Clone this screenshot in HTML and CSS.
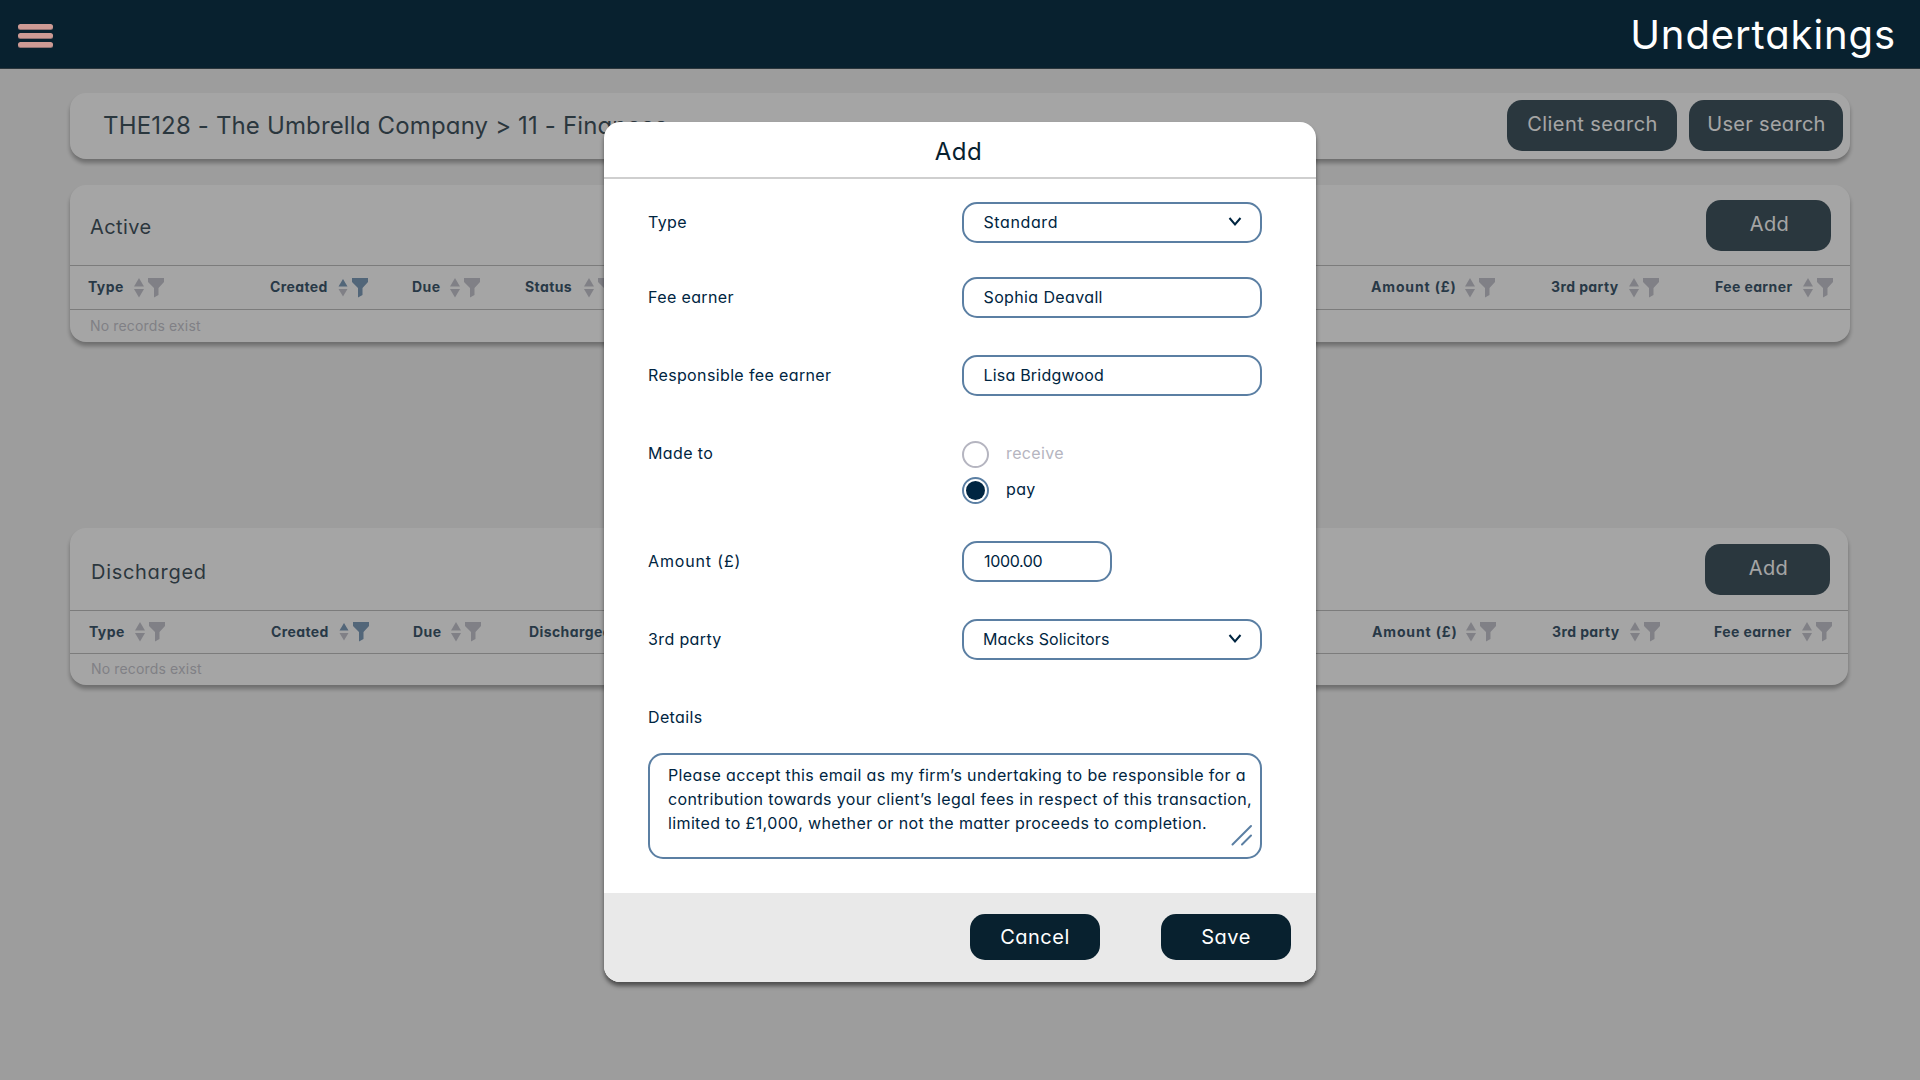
FILE: index.html
```html
<!DOCTYPE html>
<html lang="en">
<head>
    <meta charset="UTF-8">
    <meta name="viewport" content="width=device-width, initial-scale=1.0">
    <title>Undertakings</title>
    <link rel="stylesheet" href="styles.css">
</head>
<body>
    <!-- Icons used in the table headings -->
    <svg class="sprite" width="0" height="0">
        <symbol id="sort" viewBox="0 0 10 20">
            <path d="M5 0 10 8.500H0z"/>
            <path d="M0 11h10l-5 8.500z"/>
        </symbol>
        <symbol id="sort-asc" viewBox="0 0 10 20">
            <path fill="#577fa6" d="M5 1 9.500 8.500H.5z"/>
            <path d="M.5 11h9L5 18.500z"/>
        </symbol>
        <symbol id="filter" viewBox="0 0 16 20">
            <path d="M0 0h16v4l-5.500 6v7L6 19.500V10L0 4z"/>
        </symbol>
    </svg>

    <header class="topbar">
        <button class="menu" aria-label="Menu"><span></span><span></span><span></span></button>
        <h1>Undertakings</h1>
    </header>

    <main class="page">
        <section class="card crumbs">
            <h2>THE128 - The Umbrella Company &gt; 11 - Finances</h2>
            <button class="btn client">Client search</button>
            <button class="btn user">User search</button>
        </section>

        <section class="card active">
            <div class="card-top">
                <h3>Active</h3>
                <button class="btn add">Add</button>
            </div>
            <div class="columns">
                <div class="col"><span>Type</span><svg class="sort"><use href="#sort"/></svg><svg class="filter"><use href="#filter"/></svg></div>
                <div class="col sorted"><span>Created</span><svg class="sort"><use href="#sort-asc"/></svg><svg class="filter"><use href="#filter"/></svg></div>
                <div class="col"><span>Due</span><svg class="sort"><use href="#sort"/></svg><svg class="filter"><use href="#filter"/></svg></div>
                <div class="col status"><span>Status</span><svg class="sort"><use href="#sort"/></svg><svg class="filter"><use href="#filter"/></svg></div>
                <div class="col money"><span>Amount (£)</span><svg class="sort"><use href="#sort"/></svg><svg class="filter"><use href="#filter"/></svg></div>
                <div class="col"><span>3rd party</span><svg class="sort"><use href="#sort"/></svg><svg class="filter"><use href="#filter"/></svg></div>
                <div class="col"><span>Fee earner</span><svg class="sort"><use href="#sort"/></svg><svg class="filter"><use href="#filter"/></svg></div>
            </div>
            <p class="empty">No records exist</p>
        </section>

        <section class="card discharged">
            <div class="card-top">
                <h3>Discharged</h3>
                <button class="btn add">Add</button>
            </div>
            <div class="columns">
                <div class="col"><span>Type</span><svg class="sort"><use href="#sort"/></svg><svg class="filter"><use href="#filter"/></svg></div>
                <div class="col sorted"><span>Created</span><svg class="sort"><use href="#sort-asc"/></svg><svg class="filter"><use href="#filter"/></svg></div>
                <div class="col"><span>Due</span><svg class="sort"><use href="#sort"/></svg><svg class="filter"><use href="#filter"/></svg></div>
                <div class="col"><span>Discharged</span><svg class="sort"><use href="#sort"/></svg><svg class="filter"><use href="#filter"/></svg></div>
                <div class="col money"><span>Amount (£)</span><svg class="sort"><use href="#sort"/></svg><svg class="filter"><use href="#filter"/></svg></div>
                <div class="col"><span>3rd party</span><svg class="sort"><use href="#sort"/></svg><svg class="filter"><use href="#filter"/></svg></div>
                <div class="col"><span>Fee earner</span><svg class="sort"><use href="#sort"/></svg><svg class="filter"><use href="#filter"/></svg></div>
            </div>
            <p class="empty">No records exist</p>
        </section>
    </main>

    <div class="overlay">
        <div class="modal">
            <h2 class="modal-title">Add</h2>
            <form class="modal-body">
                <div class="row first">
                    <label>Type</label>
                    <div class="field select">Standard
                        <svg width="14" height="10" viewBox="0 0 14 10"><path d="M1.500 1 7 7.500 12.500 1"/></svg>
                    </div>
                </div>
                <div class="row">
                    <label>Fee earner</label>
                    <input class="field" type="text" value="Sophia Deavall">
                </div>
                <div class="row">
                    <label>Responsible fee earner</label>
                    <input class="field responsible" type="text" value="Lisa Bridgwood">
                </div>
                <div class="row">
                    <label>Made to</label>
                    <div class="radios">
                        <div class="radio"><i></i>receive</div>
                        <div class="radio checked"><i></i>pay</div>
                    </div>
                </div>
                <div class="row">
                    <label class="money">Amount (£)</label>
                    <input class="field amount" type="text" value="1000.00">
                </div>
                <div class="row">
                    <label>3rd party</label>
                    <div class="field select party">Macks Solicitors
                        <svg width="14" height="10" viewBox="0 0 14 10"><path d="M1.500 1 7 7.500 12.500 1"/></svg>
                    </div>
                </div>
                <div class="row last">
                    <label>Details</label>
                </div>
                <div class="details">
                    <p>Please accept this email as my firm’s undertaking to be responsible for a<br>
                    contribution towards your client’s legal fees in respect of this transaction,<br>
                    limited to £1,000, whether or not the matter proceeds to completion.</p>
                    <svg class="grip" width="22" height="22" viewBox="0 0 22 22"><path d="M1.500 20.500 20 2M11 20.500l9-9"/></svg>
                </div>
            </form>
            <div class="modal-footer">
                <button class="btn">Cancel</button>
                <button class="btn">Save</button>
            </div>
        </div>
    </div>
</body>
</html>
```
FILE: styles.css
```css
* {
    margin: 0;
    padding: 0;
    box-sizing: border-box;
}

body {
    background: #efefef;
    color: #08212f;
    height: 1080px;
    overflow: hidden;
    font-family: Inter, "Open Sans", sans-serif;
    /* single-storey a */
    font-feature-settings: "cv11";
}

button, input {
    font: inherit;
    font-feature-settings: inherit;
    letter-spacing: inherit;
    color: inherit;
    border: none;
    outline: none;
}

h1, h2, h3 {
    font-weight: 400;
}

.sprite {
    position: absolute;
}

/* Top bar */
.topbar {
    position: relative;
    z-index: 2;
    display: flex;
    justify-content: space-between;
    align-items: center;
    height: 69px;
    padding: 0 24px 0 18px;
    background: #08212f;
    border-bottom: 1px solid #2b363c;
    color: #fff;
}

.topbar h1 {
    font-size: 40px;
    letter-spacing: 0.9px;
}

.menu {
    display: flex;
    flex-direction: column;
    gap: 4px;
    margin-top: 3px;
    background: none;
}

.menu span {
    width: 35px;
    height: 5px;
    border-radius: 3px;
    background: #cd9a94;
    box-shadow: 0 1px 0 #8f7071;
}

/* Cards */
.page {
    padding: 24px 70px 0;
}

.card {
    background: #fff;
    border-radius: 16px;
    box-shadow: 0 4px 4px rgba(0, 0, 0, 0.4);
}

.crumbs {
    display: flex;
    height: 66px;
    padding: 7px 7px 0 33px;
}

.crumbs h2 {
    flex: 1;
    font-size: 24px;
    letter-spacing: 0.15px;
    line-height: 52px;
    white-space: nowrap;
}

.btn {
    height: 51px;
    padding-bottom: 3px;
    border-radius: 15px;
    background: #08212f;
    color: #fff;
    font-size: 20px;
    letter-spacing: 0.45px;
}

.client {
    width: 170px;
    margin-right: 12px;
    padding-left: 1px;
}

.user {
    width: 154px;
    padding-left: 1px;
    letter-spacing: 0.3px;
}

.add {
    width: 125px;
    padding-left: 2px;
}

.active {
    margin-top: 26px;
}

.discharged {
    width: 1778px;
    height: 157px;
    margin-top: 186px;
}

.card-top {
    display: flex;
    justify-content: space-between;
    height: 80px;
    padding: 15px 19px 0 20px;
}

.card-top h3 {
    font-size: 20px;
    letter-spacing: 0.4px;
    line-height: 54px;
}

.columns {
    display: grid;
    grid-template-columns: 182px 142px 113px 846px 180px 164px 1fr;
    align-items: center;
    height: 45px;
    padding-left: 18px;
    border-top: 1px solid #adadad;
    border-bottom: 1px solid #adadad;
}

.col {
    display: flex;
    align-items: center;
    color: #002541;
    font-size: 14px;
    font-weight: 700;
    letter-spacing: 0.4px;
}

.col span {
    padding-bottom: 2px;
}

.col svg {
    height: 20px;
    fill: #b5b5c0;
}

.col .sort {
    width: 10px;
    margin: 0 4px 0 10px;
}

.col .filter {
    width: 16px;
}

.sorted .filter {
    fill: #577fa6;
}

.status .sort {
    margin-left: 12px;
}

.money {
    letter-spacing: 0.85px;
}

.money .sort {
    margin-left: 8px;
}

.empty {
    padding-left: 20px;
    color: #b5b5c0;
    font-size: 14px;
    letter-spacing: 0.15px;
    line-height: 32px;
}

.discharged .card-top {
    height: 82px;
    padding: 16px 18px 0 21px;
}

.discharged .card-top h3 {
    letter-spacing: 0.7px;
    line-height: 56px;
}

.discharged .columns {
    grid-template-columns: 182px 142px 116px 843px 180px 162px 1fr;
    height: 44px;
    padding-left: 19px;
}

.discharged .empty {
    padding-left: 21px;
    line-height: 30px;
}

/* Dialog */
.overlay {
    position: absolute;
    inset: 0;
    z-index: 1;
    padding: 122px 604px 0;
    background: rgba(77, 77, 77, 0.506);
}

.modal {
    width: 712px;
    height: 860px;
    border-radius: 16px;
    background: #fff;
    box-shadow: 0 4px 4px rgba(0, 0, 0, 0.5);
    overflow: hidden;
}

.modal-title {
    height: 57px;
    padding-right: 3px;
    border-bottom: 2px solid #cfcfcf;
    font-size: 24px;
    letter-spacing: 0.6px;
    line-height: 60px;
    text-align: center;
}

.modal-body {
    height: 714px;
    padding: 23px 54px 0 44px;
    color: #002541;
    font-size: 16px;
    letter-spacing: 0.37px;
}

.row {
    display: flex;
    margin-bottom: 37px;
}

.row.first {
    margin-bottom: 34px;
}

.row.last {
    margin-bottom: 15px;
}

.row label {
    width: 314px;
    line-height: 41px;
}

.field {
    width: 300px;
    height: 41px;
    padding: 0 18px 2px 19.5px;
    border: 2px solid #5b7fa3;
    border-radius: 15px;
    background: #fff;
}

.select {
    display: flex;
    justify-content: space-between;
    align-items: center;
    letter-spacing: 0.6px;
}

.select svg {
    fill: none;
    stroke: #002541;
    stroke-width: 2;
}

.responsible {
    letter-spacing: 0.2px;
}

.party {
    padding-left: 19px;
    letter-spacing: 0.1px;
}

.amount {
    width: 150px;
    padding-left: 20px;
    letter-spacing: -0.35px;
}

.radios {
    display: flex;
    flex-direction: column;
    gap: 9px;
    padding-top: 8px;
}

.radio {
    display: flex;
    gap: 17px;
    height: 27px;
    color: #b5b5c0;
    line-height: 25px;
}

.radio i {
    width: 27px;
    height: 27px;
    border: 2px solid #b5b5c0;
    border-radius: 50%;
}

.radio.checked {
    color: #002541;
}

.checked i {
    padding: 2px;
    border-color: #5b7fa3;
    background: #002541 content-box;
}

.details {
    position: relative;
    width: 614px;
    height: 106px;
    padding: 8px 0 0 18px;
    border: 2px solid #5b7fa3;
    border-radius: 15px;
    line-height: 24px;
    white-space: nowrap;
}

.grip {
    position: absolute;
    right: 7px;
    bottom: 11px;
    fill: none;
    stroke: #5b7fa3;
    stroke-width: 2;
    stroke-linecap: round;
}

.modal-footer {
    display: flex;
    justify-content: flex-end;
    gap: 61px;
    height: 89px;
    padding: 21px 25px 0;
    background: #e9e9e9;
}

.modal-footer .btn {
    width: 130px;
    height: 46px;
    padding-bottom: 0;
    letter-spacing: 0.5px;
}
```
